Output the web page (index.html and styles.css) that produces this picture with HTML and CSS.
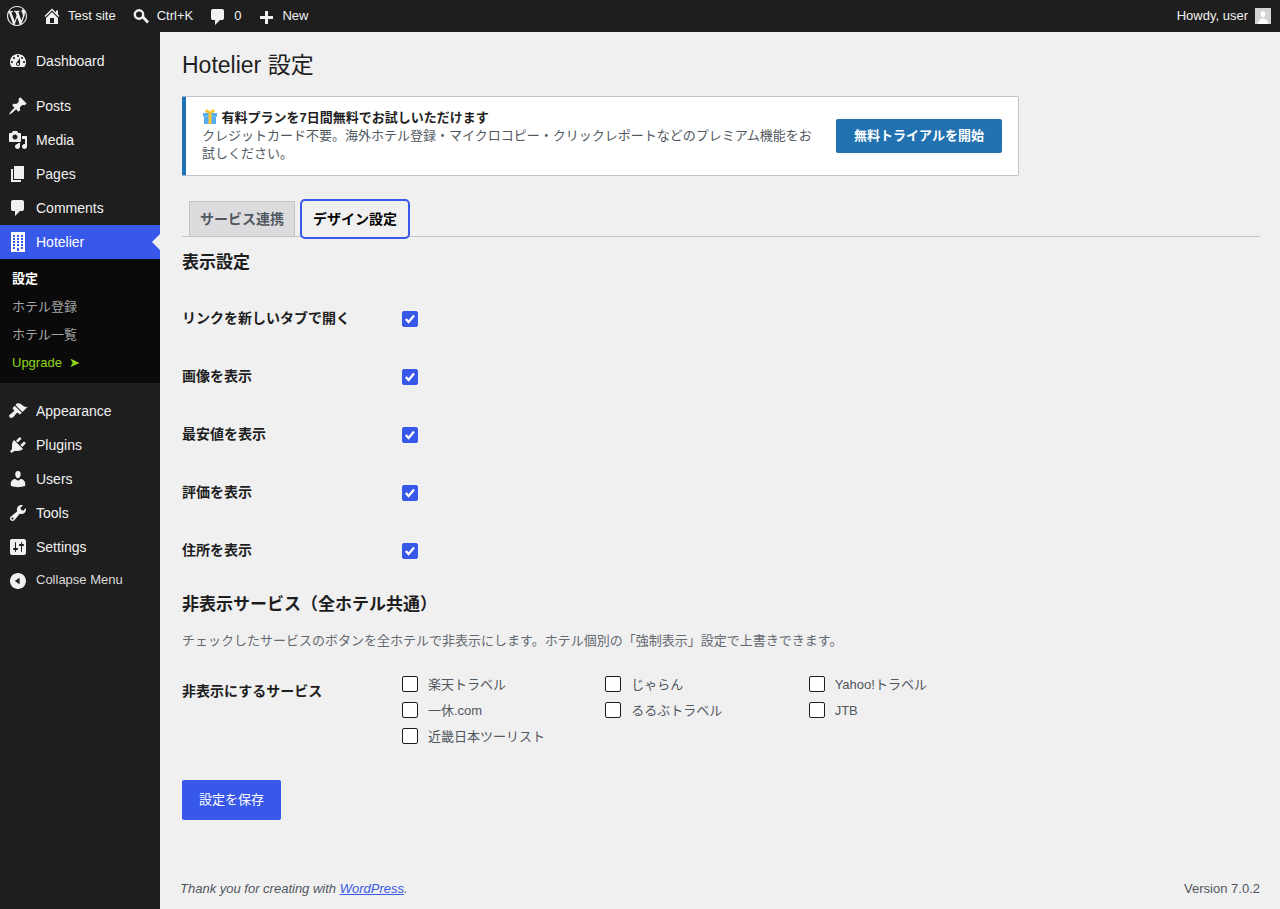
FILE: index.html
```html
<!DOCTYPE html>
<html lang="ja">
<head>
    <meta charset="UTF-8">
    <meta name="viewport" content="width=device-width, initial-scale=1.0">
    <title>Hotelier 設定</title>
    <link rel="stylesheet" href="styles.css">
</head>
<body>
    <div class="adminbar">
        <div class="bar-left">
            <a class="bar-logo"><svg viewBox="0 0 20 20" width="20" height="20"><path d="M20 10c0-5.51-4.49-10-10-10C4.48 0 0 4.49 0 10c0 5.52 4.48 10 10 10 5.51 0 10-4.48 10-10zM7.78 15.37L4.37 6.22c.55-.02 1.17-.08 1.17-.08.5-.06.44-1.13-.06-1.11 0 0-1.45.11-2.37.11-.18 0-.37 0-.58-.01C4.12 2.69 6.87 1.11 10 1.11c2.33 0 4.45.87 6.05 2.34-.68-.11-1.65.39-1.65 1.58 0 .74.45 1.36.9 2.1.35.61.55 1.36.55 2.46 0 1.49-1.4 5-1.4 5l-3.03-8.37c.54-.02.82-.17.82-.17.5-.05.44-1.25-.06-1.22 0 0-1.44.12-2.38.12-.87 0-2.33-.12-2.33-.12-.5-.03-.56 1.2-.06 1.22l.92.08 1.26 3.41zM17.41 10c.24-.64.74-1.87.43-4.25.7 1.29 1.05 2.71 1.05 4.25 0 3.29-1.73 6.24-4.4 7.78.97-2.59 1.94-5.2 2.92-7.78zM6.1 18.09C3.12 16.65 1.11 13.53 1.11 10c0-1.3.23-2.48.72-3.59C3.25 10.3 4.67 14.2 6.1 18.09zm4.03-6.63l2.58 6.98c-.86.29-1.76.45-2.71.45-.79 0-1.57-.11-2.29-.33.81-2.38 1.62-4.74 2.42-7.1z"/></svg></a>
            <a class="bar-item bar-site"><svg viewBox="0 0 20 20" width="20" height="20"><path d="M16 8.5l1.53 1.53-1.06 1.06L10 4.62l-6.47 6.47-1.06-1.06L10 2.5l4 4v-2h2v4zm-6-2.46l6 5.99V18H4v-5.97zM12 17v-5H8v5h4z"/></svg>Test site</a>
            <a class="bar-item bar-search"><svg viewBox="0 0 20 20" width="20" height="20"><circle cx="8" cy="8.500" r="4.200" fill="none" stroke="currentColor" stroke-width="2.400"/><path d="M11 12l2-2 5 5.400-2 2z"/></svg>Ctrl+K</a>
            <a class="bar-item bar-comments"><svg viewBox="0 0 20 20" width="20" height="20"><path d="M5 2h9q.82 0 1.41.59T16 4v7q0 .82-.59 1.41T14 13h-2l-5 5v-5H5q-.82 0-1.41-.59T3 11V4q0-.82.59-1.41T5 2z"/></svg>0</a>
            <a class="bar-item bar-new"><svg viewBox="0 0 20 20" width="20" height="20"><path d="M17 7v3h-5v5H9v-5H4V7h5V2h3v5h5z"/></svg>New</a>
        </div>
        <a class="bar-user">Howdy, user
            <span class="avatar"><svg viewBox="0 0 16 16" width="16" height="16"><path d="M8 3.200c1.500 0 2.400 1.200 2.400 2.800S9.400 9.200 8 9.200 5.600 7.600 5.600 6 6.500 3.200 8 3.200zM3 16c0-3.500 2.200-5.600 5-5.600s5 2.100 5 5.600z"/></svg></span>
        </a>
    </div>

    <div class="layout">
        <div class="sidebar">
            <ul class="menu">
                <li class="menu-item"><svg viewBox="0 0 20 20"><path fill-rule="evenodd" d="M3.76 16h12.48c1.1-1.37 1.76-3.11 1.76-5 0-4.42-3.58-8-8-8s-8 3.58-8 8c0 1.890.66 3.630 1.760 5zM10 4c.55 0 1 .45 1 1s-.45 1-1 1-1-.45-1-1 .45-1 1-1zM6 6c.55 0 1 .45 1 1s-.45 1-1 1-1-.45-1-1 .45-1 1-1zm8 0c.55 0 1 .45 1 1s-.45 1-1 1-1-.45-1-1 .45-1 1-1zm-5.370 5.550L12 7v6c0 1.100-.9 2-2 2s-2-.9-2-2c0-.57.24-1.080.63-1.450zM4 10c.55 0 1 .45 1 1s-.45 1-1 1-1-.45-1-1 .45-1 1-1zm12 0c.55 0 1 .45 1 1s-.45 1-1 1-1-.45-1-1 .45-1 1-1zm-5 3c0-.55-.45-1-1-1s-1 .45-1 1 .45 1 1 1 1-.45 1-1z"/></svg>Dashboard</li>
                <li class="menu-sep"></li>
                <li class="menu-item"><svg viewBox="0 0 20 20"><path d="M10.440 3.020l1.820-1.820 6.360 6.350-1.830 1.820c-1.050-.68-2.480-.57-3.410.36l-.75.75c-.92.93-1.040 2.350-.35 3.410l-1.830 1.820-2.410-2.410-2.800 2.790c-.42.42-3.380 2.710-3.800 2.290s1.860-3.390 2.280-3.810l2.790-2.790L4.100 9.360l1.830-1.820c1.050.69 2.480.57 3.400-.36l.75-.75c.93-.92 1.050-2.350.36-3.410z"/></svg>Posts</li>
                <li class="menu-item"><svg viewBox="0 0 20 20"><path d="M13 11V4c0-.55-.45-1-1-1h-1.670L9 1H5L3.670 3H2c-.55 0-1 .45-1 1v7c0 .55.45 1 1 1h10c.55 0 1-.45 1-1zM7 4.500c1.380 0 2.500 1.120 2.500 2.500S8.380 9.500 7 9.500 4.500 8.380 4.500 7 5.620 4.500 7 4.500zM14 6h5v10.500c0 1.380-1.120 2.500-2.500 2.500S14 17.880 14 16.500s1.120-2.500 2.500-2.500c.17 0 .34.02.5.05V9h-3V6zm-4 8.050V13h2v3.500c0 1.380-1.120 2.500-2.500 2.500S7 17.880 7 16.500 8.120 14 9.500 14c.17 0 .34.02.5.05z"/></svg>Media</li>
                <li class="menu-item"><svg viewBox="0 0 20 20"><path d="M6 15V2h10v13H6zm-1 1h8v2H3V5h2v11z"/></svg>Pages</li>
                <li class="menu-item"><svg viewBox="0 0 20 20"><path d="M5 2h9q.82 0 1.410.59T16 4v7q0 .82-.59 1.410T14 13h-2l-5 5v-5H5q-.82 0-1.410-.59T3 11V4q0-.82.59-1.410T5 2z"/></svg>Comments</li>
                <li class="menu-item current"><svg viewBox="0 0 20 20"><path fill-rule="evenodd" d="M3 20h14V0H3v20zM7 3H5v2h2V3zm4 0H9v2h2V3zm4 0h-2v2h2V3zM7 6H5v2h2V6zm4 0H9v2h2V6zm4 0h-2v2h2V6zM7 9H5v2h2V9zm4 0H9v2h2V9zm4 0h-2v2h2V9zm-8 3H5v2h2v-2zm4 0H9v2h2v-2zm4 0h-2v2h2v-2zm-4 7v-3H9v3h2zM7 15H5v2h2v-2zm8 0h-2v2h2v-2z"/></svg>Hotelier</li>
                <li class="submenu">
                    <a class="sub-item sub-current">設定</a>
                    <a class="sub-item">ホテル登録</a>
                    <a class="sub-item">ホテル一覧</a>
                    <a class="sub-item sub-upgrade">Upgrade <span class="upgrade-arrow">➤</span></a>
                </li>
                <li class="menu-sep"></li>
                <li class="menu-item"><svg viewBox="0 0 20 20"><path d="M14.480 11.060L7.410 3.990l1.500-1.500c.5-.56 2.300-.47 3.510.32 1.210.8 1.430 1.280 2.910 2.100 1.180.64 2.450 1.260 4.450.85zm-.71.71L6.700 4.700 4.930 6.470c-.39.39-.39 1.020 0 1.410l1.060 1.060c.39.39.39 1.030 0 1.420-.6.6-1.430 1.110-2.210 1.690-.35.26-.7.53-1.010.84C1.430 13.230.4 14.990 1.700 16.290c1.300 1.300 3.060.27 4.400-1.060.31-.31.58-.66.84-1.010.58-.78 1.090-1.610 1.690-2.210.39-.39 1.020-.39 1.410 0l1.060 1.060c.39.39 1.020.39 1.410 0z"/></svg>Appearance</li>
                <li class="menu-item"><svg viewBox="0 0 20 20"><path d="M13.110 4.360L9.870 7.600 8 5.730l3.240-3.240c.35-.34 1.050-.2 1.560.32.52.51.66 1.210.31 1.550zm-8 1.770l.91-1.120 9.010 9.010-1.190.84c-.71.71-2.630 1.160-3.820 1.160H6.140L4.900 17.260c-.59.59-1.540.59-2.120 0-.59-.58-.59-1.530 0-2.120l1.240-1.240v-3.880c0-1.130.4-3.190 1.090-3.890zm7.260 3.970l3.240-3.240c.34-.35 1.040-.21 1.550.31.52.51.66 1.210.31 1.550l-3.240 3.250z"/></svg>Plugins</li>
                <li class="menu-item"><svg viewBox="0 0 20 20"><path d="M10 9.250c-2.270 0-2.730-3.440-2.730-3.440C7 4.020 7.820 2 9.970 2c2.160 0 2.980 2.020 2.710 3.810 0 0-.41 3.440-2.680 3.440zm0 2.570L12.720 10c2.390 0 4.520 2.330 4.520 4.530v2.490s-3.650 1.130-7.240 1.130c-3.650 0-7.240-1.130-7.240-1.130v-2.490c0-2.250 1.940-4.480 4.470-4.480z"/></svg>Users</li>
                <li class="menu-item"><svg viewBox="0 0 20 20"><path fill-rule="evenodd" d="M16.680 9.770c-1.340 1.340-3.300 1.670-4.950.99l-5.410 6.520c-.99.99-2.590.99-3.580 0s-.99-2.590 0-3.570l6.520-5.420c-.68-1.650-.35-3.610.99-4.950 1.280-1.280 3.120-1.620 4.720-1.060l-2.890 2.890 2.820 2.820 2.860-2.870c.53 1.580.18 3.390-1.080 4.650zM3.810 16.210c.4.39 1.040.39 1.430 0 .4-.4.4-1.040 0-1.430-.39-.4-1.030-.4-1.430 0-.39.39-.39 1.030 0 1.430z"/></svg>Tools</li>
                <li class="menu-item"><svg viewBox="0 0 20 20"><path fill-rule="evenodd" d="M18 16V4c0-1.100-.9-2-2-2H4c-1.100 0-2 .9-2 2v12c0 1.100.9 2 2 2h12c1.100 0 2-.9 2-2zM8 11h1c.55 0 1 .45 1 1s-.45 1-1 1H8v1.500c0 .28-.22.5-.5.5s-.5-.22-.5-.5V13H6c-.55 0-1-.45-1-1s.45-1 1-1h1V5.500c0-.28.22-.5.5-.5s.5.22.5.5V11zm5-2h-1c-.55 0-1-.45-1-1s.45-1 1-1h1V5.500c0-.28.22-.5.5-.5s.5.22.5.5V7h1c.55 0 1 .45 1 1s-.45 1-1 1h-1v5.500c0 .28-.22.5-.5.5s-.5-.22-.5-.5V9z"/></svg>Settings</li>
                <li class="menu-collapse"><svg viewBox="0 0 20 20"><path fill-rule="evenodd" d="M10 20c5.520 0 10-4.480 10-10S15.520 0 10 0 0 4.480 0 10s4.480 10 10 10zm2-14v8l-6-4z"/></svg>Collapse Menu</li>
            </ul>
        </div>

        <div class="main">
            <div class="wrap">
                <h1>Hotelier 設定</h1>

                <div class="notice">
                    <div class="notice-text">
                        <strong><svg class="gift" viewBox="0 0 16 16" width="16" height="16"><path fill="#f7c32e" d="M7 1.500C5.500 0 3 .5 3.200 2.200 3.300 3.500 5.500 4 8 4c2.500 0 4.700-.5 4.800-1.800C13 .5 10.500 0 9 1.500L8 3z"/><rect fill="#55acee" x="1" y="4" width="14" height="3.500"/><rect fill="#55acee" x="2" y="7.500" width="12" height="7.500"/><rect fill="#f7c32e" x="6.500" y="4" width="3" height="11"/></svg> 有料プランを7日間無料でお試しいただけます</strong>
                        <p>クレジットカード不要。海外ホテル登録・マイクロコピー・クリックレポートなどのプレミアム機能をお試しください。</p>
                    </div>
                    <a class="btn-trial">無料トライアルを開始</a>
                </div>

                <div class="tabs">
                    <a class="tab">サービス連携</a>
                    <a class="tab tab-active">デザイン設定</a>
                </div>

                <h2 class="first">表示設定</h2>
                <div class="form-row"><span class="form-label">リンクを新しいタブで開く</span><input type="checkbox" checked></div>
                <div class="form-row"><span class="form-label">画像を表示</span><input type="checkbox" checked></div>
                <div class="form-row"><span class="form-label">最安値を表示</span><input type="checkbox" checked></div>
                <div class="form-row"><span class="form-label">評価を表示</span><input type="checkbox" checked></div>
                <div class="form-row"><span class="form-label">住所を表示</span><input type="checkbox" checked></div>

                <h2 class="second">非表示サービス（全ホテル共通）</h2>
                <p class="desc">チェックしたサービスのボタンを全ホテルで非表示にします。ホテル個別の「強制表示」設定で上書きできます。</p>

                <div class="hide-row">
                    <span class="form-label">非表示にするサービス</span>
                    <div class="service-grid">
                        <label><input type="checkbox">楽天トラベル</label>
                        <label><input type="checkbox">じゃらん</label>
                        <label><input type="checkbox">Yahoo!トラベル</label>
                        <label><input type="checkbox">一休.com</label>
                        <label><input type="checkbox">るるぶトラベル</label>
                        <label><input type="checkbox">JTB</label>
                        <label><input type="checkbox">近畿日本ツーリスト</label>
                    </div>
                </div>

                <a class="btn-save">設定を保存</a>
            </div>

            <div class="footer">
                <span class="thanks">Thank you for creating with <a>WordPress</a>.</span>
                <span>Version 7.0.2</span>
            </div>
        </div>
    </div>
</body>
</html>
```

FILE: styles.css
```css
* {
    box-sizing: border-box;
}

html, body {
    height: 100%;
}

body {
    margin: 0;
    background: #f0f0f1;
    color: #1e1e1e;
    font-family: "Liberation Sans", "Noto Sans CJK JP", sans-serif;
    font-size: 13px;
    line-height: 1.4;
    text-spacing-trim: space-all;
    overflow: hidden;
}

/* admin bar */
.adminbar {
    height: 32px;
    background: #1e1e1e;
    color: #f0f0f0;
    display: flex;
    justify-content: space-between;
    padding-right: 9px;
}

.bar-left {
    display: flex;
}

.adminbar svg {
    fill: currentColor;
}

.bar-logo {
    width: 34px;
    display: flex;
    align-items: center;
    padding-left: 7px;
}

.bar-item {
    display: flex;
    align-items: center;
    gap: 6px;
    padding: 0 8px;
}

.bar-search,
.bar-comments,
.bar-new {
    padding-left: 7px;
}

.bar-comments svg {
    margin-top: 2px;
}

.bar-new svg {
    margin-top: 6px;
}

.bar-user {
    display: flex;
    align-items: center;
    gap: 7px;
}

.avatar {
    width: 16px;
    height: 16px;
    background: #d4d4d4;
    display: block;
}

.avatar svg {
    display: block;
    fill: #fff;
}

/* sidebar */
.layout {
    display: flex;
    height: 877px;
}

.sidebar {
    width: 160px;
    flex: none;
    background: #1e1e1e;
    color: #f0f0f0;
    padding-top: 12px;
}

.menu {
    list-style: none;
    margin: 0;
    padding: 0;
}

.menu-item {
    height: 34px;
    display: flex;
    align-items: center;
    gap: 8px;
    padding: 2px 0 0 8px;
    font-size: 14px;
    position: relative;
}

.menu-item svg {
    width: 20px;
    height: 20px;
    flex: none;
    margin-top: -2px;
    fill: currentColor;
}

.menu-sep {
    height: 11px;
}

.menu-item.current {
    background: #3858e9;
    color: #fff;
}

.menu-item.current::after {
    content: "";
    position: absolute;
    right: 0;
    top: 9px;
    border: 8px solid transparent;
    border-right-color: #f0f0f1;
    border-left-width: 0;
}

.submenu {
    background: #0a0a0a;
    padding: 6px 0;
    height: 124px;
}

.sub-item {
    display: block;
    height: 28px;
    line-height: 28px;
    padding-left: 12px;
    color: #a7a7a7;
}

.sub-current {
    color: #fff;
    font-weight: 700;
}

.sub-upgrade {
    color: #8fd619;
}

.upgrade-arrow {
    margin-left: 4px;
}

.menu-collapse {
    height: 32px;
    display: flex;
    align-items: center;
    gap: 10px;
    padding-left: 10px;
    color: #dcdcdc;
}

.menu-collapse svg {
    width: 16px;
    height: 16px;
    fill: #f0f0f0;
    margin-top: 2px;
}

/* main */
.main {
    flex: 1;
    display: flex;
    flex-direction: column;
    min-width: 0;
}

.wrap {
    flex: 1;
    margin: 0 20px 0 22px;
    padding-top: 17px;
}

h1 {
    margin: 0;
    font-size: 23px;
    font-weight: 400;
    line-height: 32px;
    color: #1e1e1e;
}

.notice {
    margin-top: 15px;
    width: 837px;
    height: 80px;
    background: #fff;
    border: 1px solid #c3c4c7;
    border-left: 4px solid #2271b1;
    border-radius: 2px;
    display: flex;
    align-items: center;
    justify-content: space-between;
    padding: 0 16px 0 16px;
}

.notice-text {
    width: 618px;
    color: #50575e;
    line-height: 18px;
}

.notice-text strong {
    color: #1e1e1e;
    display: block;
}

.gift {
    vertical-align: -3px;
}

.notice-text p {
    margin: 0;
}

.btn-trial {
    background: #2271b1;
    color: #fff;
    font-weight: 700;
    width: 166px;
    height: 34px;
    line-height: 34px;
    text-align: center;
    border-radius: 2px;
}

/* tabs */
.tabs {
    margin-top: 25px;
    height: 36px;
    border-bottom: 1px solid #c3c4c7;
    display: flex;
    padding-left: 7px;
    gap: 7px;
}

.tab {
    height: 35px;
    width: 106px;
    line-height: 35px;
    text-align: center;
    font-size: 14px;
    font-weight: 700;
    color: #50575e;
    background: #dcdcde;
    border: 1px solid #c3c4c7;
    border-bottom: none;
}

.tab-active {
    color: #000;
    background: #f0f0f1;
    border: none;
    line-height: 37px;
    outline: 2px solid #3858e9;
    border-radius: 3px;
    height: 36px;
}

h2 {
    margin: 0;
    font-size: 17px;
    font-weight: 700;
    line-height: 24px;
    color: #1e1e1e;
}

h2.first {
    margin-top: 14px;
    margin-bottom: 15px;
}

h2.second {
    margin-top: 13px;
}

.form-row {
    height: 58px;
    display: flex;
    align-items: center;
}

.form-label {
    width: 220px;
    flex: none;
    font-size: 14px;
    font-weight: 700;
    color: #1e1e1e;
}

input[type="checkbox"] {
    appearance: none;
    width: 16px;
    height: 16px;
    margin: 0;
    flex: none;
    background: #fff;
    border: 1px solid #1e1e1e;
    border-radius: 2px;
    display: block;
}

input[type="checkbox"]:checked {
    background: #3858e9 url("data:image/svg+xml;utf8,<svg xmlns='http://www.w3.org/2000/svg' viewBox='0 0 16 16'><path d='M3.200 8l3.200 3.500 6.200-7.500' fill='none' stroke='white' stroke-width='2.600'/></svg>") center no-repeat;
    border-color: #3858e9;
}

.desc {
    margin: 15px 0 0;
    color: #646970;
    line-height: 18px;
}

.hide-row {
    display: flex;
    margin-top: 25px;
}

.hide-row .form-label {
    padding-top: 7px;
}

.service-grid {
    display: grid;
    margin-top: -3px;
    grid-template-columns: repeat(3, 203.33px);
    grid-auto-rows: 26px;
}

.service-grid label {
    display: flex;
    align-items: center;
    gap: 10px;
    color: #50575e;
    height: 26px;
}

.service-grid input {
    margin-top: -2px;
}

.btn-save {
    display: block;
    margin-top: 30px;
    width: 99px;
    height: 40px;
    line-height: 40px;
    text-align: center;
    background: #3858e9;
    color: #fff;
    border-radius: 2px;
}

.footer {
    height: 42px;
    padding: 13px 20px 0;
    display: flex;
    justify-content: space-between;
    color: #50575e;
}

.thanks {
    font-style: italic;
}

.thanks a {
    color: #3858e9;
    text-decoration: underline;
}
```
